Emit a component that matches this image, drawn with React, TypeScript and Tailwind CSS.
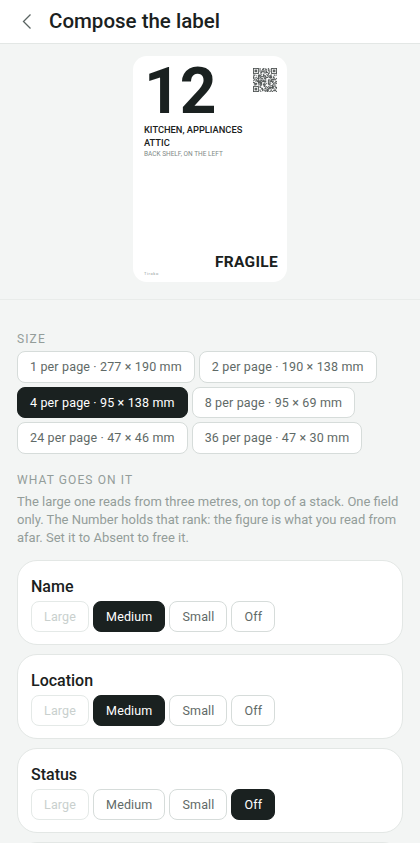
const sizes = [
  { text: "1 per page · 277 × 190 mm" },
  { text: "2 per page · 190 × 138 mm" },
  { text: "4 per page · 95 × 138 mm", active: true },
  { text: "8 per page · 95 × 69 mm" },
  { text: "24 per page · 47 × 46 mm" },
  { text: "36 per page · 47 × 30 mm" },
];

const fields = [
  { name: "Name", selected: "Medium" },
  { name: "Location", selected: "Medium" },
  { name: "Status", selected: "Off" },
];

const levels = ["Large", "Medium", "Small", "Off"];

// fake qr pattern, stable between renders
function qrCells() {
  const n = 29;
  const cells: [number, number][] = [];
  let seed = 1234567;
  const inFinder = (x: number, y: number) =>
    (x < 8 && y < 8) || (x >= n - 8 && y < 8) || (x < 8 && y >= n - 8);
  const finder = (x: number, y: number) => {
    const fx = x >= n - 8 ? x - (n - 7) : x;
    const fy = y >= n - 8 ? y - (n - 7) : y;
    if (fx < 0 || fy < 0 || fx > 6 || fy > 6) return false;
    if (fx === 0 || fx === 6 || fy === 0 || fy === 6) return true;
    return fx >= 2 && fx <= 4 && fy >= 2 && fy <= 4;
  };
  for (let y = 0; y < n; y++) {
    for (let x = 0; x < n; x++) {
      seed = (seed * 1103515245 + 12345) & 0x7fffffff;
      const on = inFinder(x, y) ? finder(x, y) : (seed >> 16) % 2 === 0;
      if (on) cells.push([x, y]);
    }
  }
  return cells;
}

function Qr() {
  return (
    <svg width="24" height="24" viewBox="0 0 29 29" className="shrink-0">
      {qrCells().map(([x, y]) => (
        <rect key={`${x}-${y}`} x={x} y={y} width="1" height="1" fill="#1a2120" />
      ))}
    </svg>
  );
}

function Label() {
  return (
    <div className="flex h-[226px] w-[154px] flex-col rounded-[14px] bg-white pl-[11px] pr-[9px]">
      <div className="flex items-start justify-between">
        <div className="mt-[4px] h-[63px] text-[64px] leading-[64px] font-bold tracking-[-1px] text-[#1a2120]">12</div>
        <div className="mt-[12px] mr-[1px]">
          <Qr />
        </div>
      </div>
      <div className="text-[9.3px] leading-[13px] font-medium text-[#1a2120]">
        <div>KITCHEN, APPLIANCES</div>
        <div>ATTIC</div>
      </div>
      <div className="mt-[1px] text-[6.5px] leading-[8px] text-[#7f8a87]">BACK SHELF, ON THE LEFT</div>
      <div className="mt-auto flex items-end justify-between pb-[5px]">
        <span className="text-[4px] leading-[6px] tracking-[0.6px] text-[#8f9997]">Tiroko</span>
        <span className="mb-[6px] text-[15.5px] leading-[18px] font-bold tracking-[0.3px] text-[#1a2120]">FRAGILE</span>
      </div>
    </div>
  );
}

function Chip({ text, active, disabled }: { text: string; active?: boolean; disabled?: boolean }) {
  let tone = "border-[#d6dcda] bg-white text-[#5f6a67]";
  if (active) tone = "border-[#1a2120] bg-[#1a2120] text-white";
  if (disabled) tone = "border-[#e4e9e7] bg-white text-[#c9d0ce]";
  return (
    <div className={`flex h-[31.5px] items-center rounded-[8px] border-[1.5px] px-[12px] pt-[2px] text-[12.5px] tracking-[0.15px] whitespace-nowrap ${tone}`}>
      {text}
    </div>
  );
}

export default function App() {
  return (
    <div className="h-[843px] overflow-hidden bg-[#f3f5f4] font-['Roboto',sans-serif]">
      <header className="flex h-[44px] items-center border-b border-[#e3e7e5] bg-white pb-[2px] pl-[20px]">
        <svg width="14" height="18" viewBox="0 0 14 18" fill="none" stroke="#5a6462" strokeWidth="1.3">
          <path d="M10.5 2.5 3.5 9.5l7 7" />
        </svg>
        <h1 className="ml-[15px] text-[20.5px] leading-[28px] font-medium text-[#1a2120]">Compose the label</h1>
      </header>

      <div className="flex h-[256px] justify-center border-b border-[#e9ecea] pt-[12px]">
        <Label />
      </div>

      <div className="px-[17px] pt-[31px]">
        <div className="text-[12px] leading-[16px] tracking-[1.1px] text-[#939d9a]">SIZE</div>
        <div className="mt-[4px] flex flex-wrap gap-[4px]">
          {sizes.map((s) => (
            <Chip key={s.text} text={s.text} active={s.active} />
          ))}
        </div>

        <div className="mt-[18px] text-[12px] leading-[16px] tracking-[1.1px] text-[#939d9a]">WHAT GOES ON IT</div>
        <p className="mt-[5px] text-[13px] leading-[18px] text-[#939d9a]">
          The large one reads from three metres, on top of a stack. One field only. The Number holds that rank: the
          figure is what you read from afar. Set it to Absent to free it.
        </p>

        <div className="mt-[13px] flex flex-col gap-[9px]">
          {fields.map((f) => (
            <div key={f.name} className="h-[85px] rounded-[20px] border border-[#e3e7e5] bg-white px-[13px] pt-[14px]">
              <div className="pt-[1px] text-[16px] leading-[22px] font-medium text-[#1a2120]">{f.name}</div>
              <div className="mt-[3px] flex gap-[4px]">
                {levels.map((l) => (
                  <Chip key={l} text={l} active={l === f.selected} disabled={l === "Large"} />
                ))}
              </div>
            </div>
          ))}
          <div className="h-[85px] rounded-[20px] border border-[#e3e7e5] bg-white" />
        </div>
      </div>
    </div>
  );
}
